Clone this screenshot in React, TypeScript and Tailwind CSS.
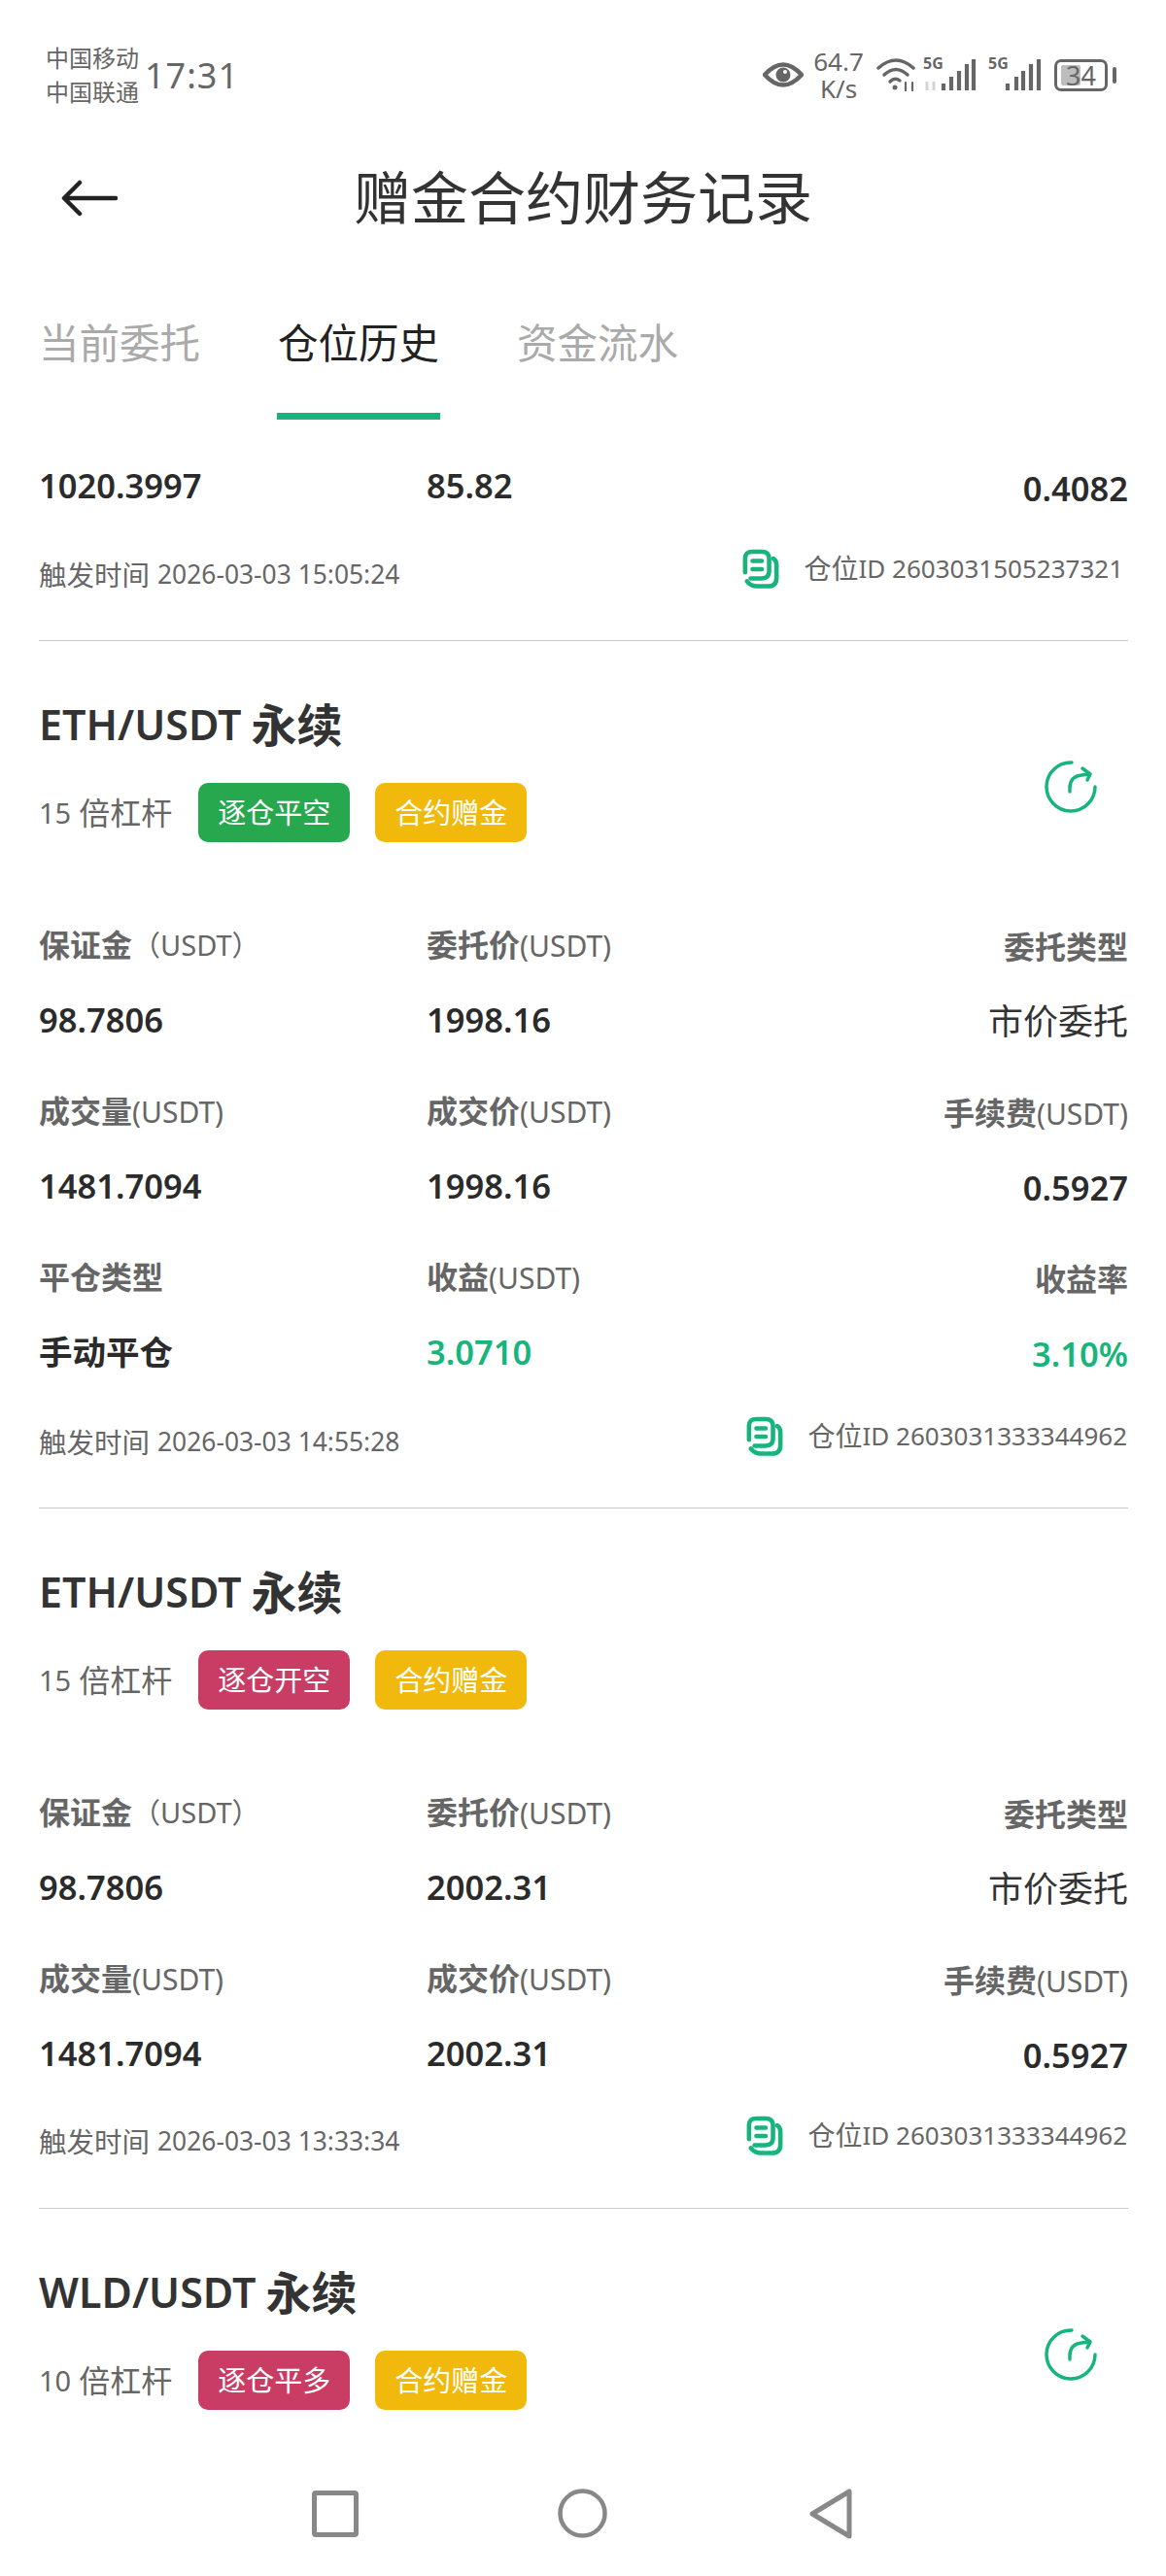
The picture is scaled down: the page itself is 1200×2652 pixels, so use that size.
import React from "react";

const GREEN = "#17b57c";

function CopyIcon() {
  return (
    <svg width="38" height="41" viewBox="0 0 40 42" fill="none" stroke={GREEN} strokeLinecap="round" strokeWidth="4.800">
      <path d="M3 25V10Q3 2.500 11 2.500H21Q29 2.500 29 10V24Q29 31.500 21 31.500H9" />
      <path d="M33.500 10Q37 12 37 17V31Q37 40 28 40H16Q9 40 5 34.500" />
      <path d="M11 12.500H21M11 21.500H21" />
    </svg>
  );
}

function RefreshIcon() {
  return (
    <svg width="54" height="54" viewBox="0 0 54 54" fill="none" stroke={GREEN} strokeLinecap="round" strokeLinejoin="round" strokeWidth="3.500">
      <path d="M28 2A25 25 0 1 0 52 27" />
      <path d="M26 32V27Q27 16 38 15L46 14M39 8L47 14L44 20" />
    </svg>
  );
}

function Label({ text, unit, paren }: { text: string; unit?: boolean; paren?: boolean }) {
  return (
    <div className="h-[40px] flex items-center whitespace-nowrap text-[32px] text-[#666666]">
      <span className="font-bold">{text}</span>
      {unit && !paren && <span className="text-[30px]">(USDT)</span>}
      {paren && <span className="text-[29px]">（USDT）</span>}
    </div>
  );
}

function Value({ text, green, plain }: { text: string; green?: boolean; plain?: boolean }) {
  return (
    <div
      className={
        "mt-[37px] h-[40px] flex items-center whitespace-nowrap " +
        (plain ? "text-[36px] text-[#333333] " : "text-[34.500px] font-semibold ") +
        (!plain ? (green ? "text-[#17b57c]" : "text-[#2b2b2b]") : "")
      }
    >
      {text}
    </div>
  );
}

type Cell = { l: string; unit?: boolean; paren?: boolean; v: string; green?: boolean; plain?: boolean };

function Row({ cells }: { cells: Cell[] }) {
  return (
    <div className="flex h-[171px]">
      <div className="w-[399px]">
        <Label text={cells[0].l} unit={cells[0].unit} paren={cells[0].paren} />
        <Value text={cells[0].v} green={cells[0].green} plain={cells[0].plain} />
      </div>
      <div className="flex-1">
        <Label text={cells[1].l} unit={cells[1].unit} />
        <Value text={cells[1].v} green={cells[1].green} plain={cells[1].plain} />
      </div>
      <div className="flex flex-col items-end pt-[2px]">
        <Label text={cells[2].l} unit={cells[2].unit} />
        <Value text={cells[2].v} green={cells[2].green} plain={cells[2].plain} />
      </div>
    </div>
  );
}

function Footer({ time, id, first }: { time: string; id: string; first?: boolean }) {
  return (
    <div className="flex justify-between h-[40px]">
      <div className="flex items-center h-[40px] text-[#666666] whitespace-nowrap">
        <span className="text-[28.500px]">触发时间</span>
        <span className="text-[26.400px] ml-[8px]">{time}</span>
      </div>
      <div className={"flex items-start h-[40px] -mt-[7px] text-[#666666] whitespace-nowrap " + (first ? "pr-[5px]" : "pr-[1px]")}>
        <CopyIcon />
        <span className="text-[28px] ml-[25px] leading-[40px]">仓位</span>
        <span className="text-[26px] leading-[40px]">ID {id}</span>
      </div>
    </div>
  );
}

function Head({ pair, lev, tag, tagColor, refresh }: { pair: string; lev: string; tag: string; tagColor: string; refresh?: boolean }) {
  return (
    <div className="flex justify-between items-start">
      <div>
        <div className="h-[58px] flex items-center font-semibold text-[#333333] whitespace-nowrap">
          <span className="text-[43px]">{pair}</span>
          <span className="text-[47px] font-bold ml-[10px]">永续</span>
        </div>
        <div className="mt-[31px] flex items-center h-[61px]">
          <span className="text-[#666666] text-[29px]">{lev}</span>
          <span className="text-[#666666] text-[32px] ml-[8px]">倍杠杆</span>
          <span className={"ml-[27px] w-[156px] h-[61px] rounded-[10px] flex items-center justify-center text-white text-[29px] " + tagColor}>
            {tag}
          </span>
          <span className="ml-[26px] w-[156px] h-[61px] rounded-[10px] flex items-center justify-center text-white text-[29px] bg-[#f0b90b]">
            合约赠金
          </span>
        </div>
      </div>
      {refresh && (
        <div className="mt-[66px] mr-[32px]">
          <RefreshIcon />
        </div>
      )}
    </div>
  );
}

export default function App() {
  return (
    <div className="w-[1200px] h-[2652px] bg-white overflow-hidden flex flex-col font-['Noto_Sans','Noto_Sans_CJK_SC',sans-serif]">
      {/* status bar */}
      <div className="h-[154px] shrink-0 flex justify-between items-center pl-[47px] pr-[51px] text-[#666666]">
        <div className="flex items-center">
          <div className="text-[24px] leading-[35px]">
            <div>中国移动</div>
            <div>中国联通</div>
          </div>
          <div className="text-[36px] tracking-[1px] ml-[6px] mt-[2px]">17:31</div>
        </div>
        <div className="flex items-center">
          <svg width="42" height="28" viewBox="0 0 42 28" fill="none">
            <path d="M2 14Q21-7 40 14Q21 35 2 14Z" stroke="#666666" strokeWidth="4.500" strokeLinejoin="round" />
            <circle cx="21" cy="14" r="7.500" fill="#666666" />
            <circle cx="23" cy="11" r="2" fill="#ffffff" />
          </svg>
          <div className="ml-[11px] w-[50px] flex flex-col items-center text-[26px] leading-[28px] whitespace-nowrap">
            <div>64.7</div>
            <div>K/s</div>
          </div>
          <svg className="ml-[14px]" width="40" height="34" viewBox="0 0 40 34" fill="none" stroke="#666666" strokeWidth="3.500" strokeLinecap="round">
            <path d="M2 10Q20-6 38 10" />
            <path d="M8 17Q20 6 32 17" />
            <path d="M14 24Q19 19 24 23" />
            <circle cx="19" cy="30" r="2.500" fill="#666666" stroke="none" />
            <path d="M30 25V33M37 25V33" strokeWidth="2.200" />
          </svg>
          <div className="relative w-[55px] h-[36px] ml-[8px]">
            <span className="absolute left-0 -top-[4px] text-[16px] leading-[20px] font-bold">5G</span>
            <svg className="absolute left-0 top-0" width="55" height="36" viewBox="0 0 55 36" fill="none" strokeLinecap="butt">
              <path d="M4 25V34M11 25V34" stroke="#d4d4d4" strokeWidth="3" />
              <path d="M21 27V34M29 20V34M37 14V34M45 7V34M52 2V34" stroke="#666666" strokeWidth="4.200" />
            </svg>
          </div>
          <div className="relative w-[55px] h-[36px] ml-[12px]">
            <span className="absolute left-0 -top-[4px] text-[16px] leading-[20px] font-bold">5G</span>
            <svg className="absolute left-0 top-0" width="55" height="36" viewBox="0 0 55 36" fill="none" strokeLinecap="butt">
              <path d="M20 27V34M29 20V34M36 14V34M44 7V34M52 2V34" stroke="#666666" strokeWidth="4.200" />
            </svg>
          </div>
          <div className="relative ml-[13px] w-[55px] h-[33px] rounded-[7px] border-[3px] border-[#666666] flex items-center justify-center text-[27px]">
            <div className="absolute left-[4px] top-[3px] bottom-[3px] w-[20px] rounded-[2px] bg-[#bdbdbd]"></div>
            <span className="relative leading-none">34</span>
          </div>
          <div className="ml-[5px] w-[4px] h-[17px] rounded-[2px] bg-[#666666]"></div>
        </div>
      </div>

      {/* header */}
      <div className="h-[98px] shrink-0 relative flex items-center justify-center">
        <svg className="absolute left-[63px] top-[31px]" width="58" height="38" viewBox="0 0 58 38" fill="none" stroke="#222222" strokeWidth="4.500" strokeLinecap="round" strokeLinejoin="round">
          <path d="M56 19H4M19 3L3 19L19 35" />
        </svg>
        <div className="text-[59px] text-[#333333] whitespace-nowrap">赠金合约财务记录</div>
      </div>

      {/* tabs */}
      <div className="h-[180px] shrink-0 flex pl-[40px] gap-[77px] text-[41.500px]">
        <div className="w-[168px] pt-[71px]">
          <div className="h-[60px] flex items-center whitespace-nowrap text-[#aaaaaa]">当前委托</div>
        </div>
        <div className="w-[168px] pt-[71px]">
          <div className="h-[60px] flex items-center justify-center whitespace-nowrap text-[#222222]">仓位历史</div>
          <div className="mt-[42px] h-[7px] bg-[#17b57c]"></div>
        </div>
        <div className="w-[168px] pt-[71px]">
          <div className="h-[60px] flex items-center whitespace-nowrap text-[#aaaaaa] ml-[2px]">资金流水</div>
        </div>
      </div>

      {/* list */}
      <div className="flex-1 min-h-0 overflow-hidden px-[40px] pt-[48px]">
        <div className="w-[1121px]">
          <div className="flex">
            <div className="w-[399px] h-[40px] flex items-center text-[34.500px] font-semibold text-[#2b2b2b]">1020.3997</div>
            <div className="flex-1 h-[40px] flex items-center text-[34.500px] font-semibold text-[#2b2b2b]">85.82</div>
            <div className="mt-[3px] h-[40px] flex items-center text-[34.500px] font-semibold text-[#2b2b2b]">0.4082</div>
          </div>
          <div className="mt-[49px]">
            <Footer time="2026-03-03 15:05:24" id="2603031505237321" first />
          </div>
          <div className="mt-[47px] h-px bg-[#c8c8c8]"></div>

          <div className="pt-[57px]">
            <Head pair="ETH/USDT" lev="15" tag="逐仓平空" tagColor="bg-[#27a84f]" refresh />
            <div className="mt-[86px]">
              <Row
                cells={[
                  { l: "保证金", paren: true, v: "98.7806" },
                  { l: "委托价", unit: true, v: "1998.16" },
                  { l: "委托类型", v: "市价委托", plain: true },
                ]}
              />
              <Row
                cells={[
                  { l: "成交量", unit: true, v: "1481.7094" },
                  { l: "成交价", unit: true, v: "1998.16" },
                  { l: "手续费", unit: true, v: "0.5927" },
                ]}
              />
              <div className="h-[117px] overflow-visible">
                <Row
                  cells={[
                    { l: "平仓类型", v: "手动平仓" },
                    { l: "收益", unit: true, v: "3.0710", green: true },
                    { l: "收益率", v: "3.10%", green: true },
                  ]}
                />
              </div>
            </div>
            <div className="mt-[53px]">
              <Footer time="2026-03-03 14:55:28" id="2603031333344962" />
            </div>
            <div className="mt-[47px] h-px bg-[#c8c8c8]"></div>
          </div>

          <div className="pt-[57px]">
            <Head pair="ETH/USDT" lev="15" tag="逐仓开空" tagColor="bg-[#c93d64]" />
            <div className="mt-[86px]">
              <Row
                cells={[
                  { l: "保证金", paren: true, v: "98.7806" },
                  { l: "委托价", unit: true, v: "2002.31" },
                  { l: "委托类型", v: "市价委托", plain: true },
                ]}
              />
              <div className="h-[117px] overflow-visible">
                <Row
                  cells={[
                    { l: "成交量", unit: true, v: "1481.7094" },
                    { l: "成交价", unit: true, v: "2002.31" },
                    { l: "手续费", unit: true, v: "0.5927" },
                  ]}
                />
              </div>
            </div>
            <div className="mt-[51px]">
              <Footer time="2026-03-03 13:33:34" id="2603031333344962" />
            </div>
            <div className="mt-[48px] h-px bg-[#c8c8c8]"></div>
          </div>

          <div className="pt-[57px]">
            <Head pair="WLD/USDT" lev="10" tag="逐仓平多" tagColor="bg-[#c93d64]" refresh />
          </div>
        </div>
      </div>

      {/* nav bar */}
      <div className="h-[150px] shrink-0 bg-white flex items-start pt-[62px] pl-[321px]">
        <svg width="48" height="48" viewBox="0 0 48 48" fill="none" stroke="#888888" strokeWidth="5" strokeLinejoin="round">
          <rect x="2.500" y="2.500" width="43" height="43" rx="1.500" />
        </svg>
        <svg className="ml-[205px] -mt-[2px]" width="51" height="51" viewBox="0 0 51 51" fill="none" stroke="#888888" strokeWidth="4.500">
          <circle cx="25.500" cy="25.500" r="23" />
        </svg>
        <svg className="ml-[208px] -mt-[2px]" width="44" height="52" viewBox="0 0 44 52" fill="none" stroke="#888888" strokeWidth="5" strokeLinejoin="round">
          <path d="M41 3V49L3 26Z" />
        </svg>
      </div>
    </div>
  );
}
